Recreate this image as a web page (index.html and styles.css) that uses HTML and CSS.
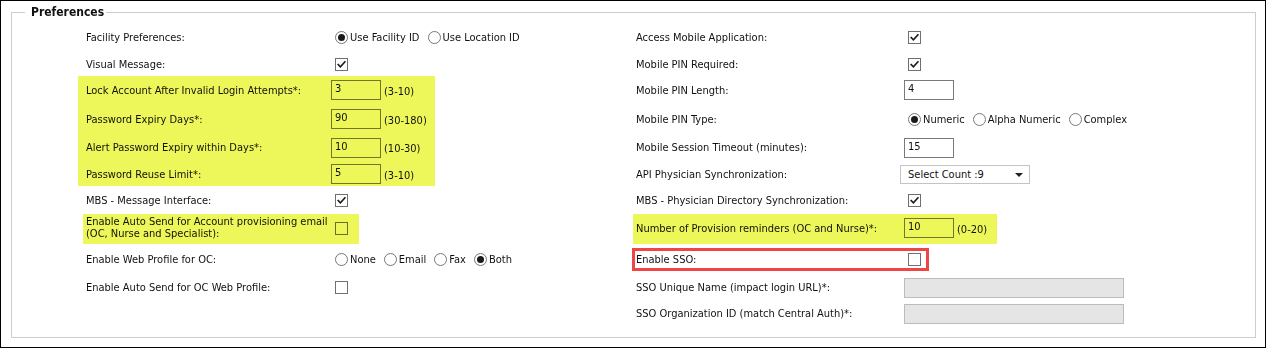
FILE: index.html
```html
<!DOCTYPE html>
<html>
<head>
<meta charset="utf-8">
<title>Preferences</title>
<link rel="stylesheet" href="styles.css">
</head>
<body>
<div class="frame">
  <fieldset class="prefs">
    <legend>Preferences</legend>
    <div class="form">
      <div class="col col-left">
        <div class="row h1"><div class="lbl">Facility Preferences:</div><div class="ctl radios"><span class="opt"><span class="radio on"></span>Use Facility ID</span><span class="opt"><span class="radio"></span>Use Location ID</span></div></div>
        <div class="row h2"><div class="lbl">Visual Message:</div><div class="ctl"><span class="cb"><svg viewBox="0 0 11 11"><path d="M2.2 5.6 L4.4 7.8 L8.9 2.8"/></svg></span></div></div>
        <div class="hl hl-a">
          <div class="row h3"><div class="lbl">Lock Account After Invalid Login Attempts*:</div><div class="ctl"><span class="tb">3</span><span class="range">(3-10)</span></div></div>
          <div class="row h4"><div class="lbl">Password Expiry Days*:</div><div class="ctl"><span class="tb">90</span><span class="range">(30-180)</span></div></div>
          <div class="row h5"><div class="lbl">Alert Password Expiry within Days*:</div><div class="ctl"><span class="tb">10</span><span class="range">(10-30)</span></div></div>
          <div class="row h6"><div class="lbl">Password Reuse Limit*:</div><div class="ctl"><span class="tb">5</span><span class="range">(3-10)</span></div></div>
        </div>
        <div class="row h7"><div class="lbl">MBS - Message Interface:</div><div class="ctl"><span class="cb"><svg viewBox="0 0 11 11"><path d="M2.2 5.6 L4.4 7.8 L8.9 2.8"/></svg></span></div></div>
        <div class="hl hl-b">
          <div class="row h8"><div class="lbl two">Enable Auto Send for Account provisioning email<br>(OC, Nurse and Specialist):</div><div class="ctl"><span class="cb"></span></div></div>
        </div>
        <div class="row h9"><div class="lbl">Enable Web Profile for OC:</div><div class="ctl radios"><span class="opt"><span class="radio"></span>None</span><span class="opt"><span class="radio"></span>Email</span><span class="opt"><span class="radio"></span>Fax</span><span class="opt"><span class="radio on"></span>Both</span></div></div>
        <div class="row h10"><div class="lbl">Enable Auto Send for OC Web Profile:</div><div class="ctl"><span class="cb"></span></div></div>
        <div class="row h11"></div>
      </div>
      <div class="col col-right">
        <div class="row h1"><div class="lbl">Access Mobile Application:</div><div class="ctl"><span class="cb"><svg viewBox="0 0 11 11"><path d="M2.2 5.6 L4.4 7.8 L8.9 2.8"/></svg></span></div></div>
        <div class="row h2"><div class="lbl">Mobile PIN Required:</div><div class="ctl"><span class="cb"><svg viewBox="0 0 11 11"><path d="M2.2 5.6 L4.4 7.8 L8.9 2.8"/></svg></span></div></div>
        <div class="row h3"><div class="lbl">Mobile PIN Length:</div><div class="ctl"><span class="tb">4</span></div></div>
        <div class="row h4"><div class="lbl">Mobile PIN Type:</div><div class="ctl radios"><span class="opt"><span class="radio on"></span>Numeric</span><span class="opt"><span class="radio"></span>Alpha Numeric</span><span class="opt"><span class="radio"></span>Complex</span></div></div>
        <div class="row h5"><div class="lbl">Mobile Session Timeout (minutes):</div><div class="ctl"><span class="tb">15</span></div></div>
        <div class="row h6"><div class="lbl">API Physician Synchronization:</div><div class="ctl"><span class="select">Select Count :9</span></div></div>
        <div class="row h7"><div class="lbl">MBS - Physician Directory Synchronization:</div><div class="ctl"><span class="cb"><svg viewBox="0 0 11 11"><path d="M2.2 5.6 L4.4 7.8 L8.9 2.8"/></svg></span></div></div>
        <div class="hl hl-c">
          <div class="row h8"><div class="lbl">Number of Provision reminders (OC and Nurse)*:</div><div class="ctl"><span class="tb">10</span><span class="range">(0-20)</span></div></div>
        </div>
        <div class="row h9 sso"><div class="lbl">Enable SSO:</div><div class="ctl"><span class="cb"></span></div></div>
        <div class="row h10"><div class="lbl">SSO Unique Name (impact login URL)*:</div><div class="ctl"><span class="tb wide disabled"></span></div></div>
        <div class="row h11"><div class="lbl">SSO Organization ID (match Central Auth)*:</div><div class="ctl"><span class="tb wide disabled"></span></div></div>
      </div>
    </div>
  </fieldset>
</div>
</body>
</html>
```

FILE: styles.css
```css
*, *::before, *::after { box-sizing: border-box; }
html, body { margin: 0; padding: 0; background: #fff; }
body {
  font-family: "DejaVu Sans Condensed", "DejaVu Sans", sans-serif;
  font-stretch: condensed;
  font-size: 11px;
  line-height: 13px;
  color: #111;
}
.frame {
  width: 1266px;
  height: 348px;
  border: 1px solid #000;
  padding: 4px 9px 9px 10px;
}
.prefs {
  margin: 0;
  padding: 0;
  border: 1px solid #cdcdcd;
  min-width: 0;
}
.prefs legend {
  margin-left: 13px;
  padding: 0 2px 0 6px;
  font-weight: bold;
  font-size: 12px;
  line-height: 14px;
  color: #111;
}
.form {
  display: grid;
  grid-template-columns: 550px 1fr;
  padding: 5px 0 10px 74px;
}
.col { display: flex; flex-direction: column; }
.row { display: flex; align-items: center; }
.lbl { flex: none; white-space: nowrap; }
.col-left .lbl { width: 245px; }
.col-right .lbl { width: 268px; }
.lbl.two { line-height: 12px; }
.ctl { display: flex; align-items: center; }

.h1 { height: 27px; }
.h2 { height: 26px; }
.h3 { height: 26px; }
.h4 { height: 32px; }
.h5 { height: 25px; }
.h6 { height: 28px; }
.h7 { height: 24px; }
.h8 { height: 32px; }
.h9 { height: 31px; }
.h10 { height: 25px; }
.h11 { height: 27px; }

/* checkbox */
.cb {
  width: 13px;
  height: 13px;
  margin-left: 4px;
  border: 1px solid #707070;
  background: #fff;
  display: inline-flex;
}
.cb svg { width: 11px; height: 11px; display: block; }
.cb path { fill: none; stroke: #1a1a1a; stroke-width: 1.6; stroke-linecap: square; }

/* radios */
.radios { gap: 8px; padding-left: 4px; }
.opt { display: inline-flex; align-items: center; gap: 2px; white-space: nowrap; }
.radio {
  width: 13px;
  height: 13px;
  border-radius: 50%;
  border: 1px solid #777;
  background: #fff;
  position: relative;
  flex: none;
}
.radio.on::after {
  content: "";
  position: absolute;
  left: 2px;
  top: 2px;
  width: 7px;
  height: 7px;
  border-radius: 50%;
  background: #1a1a1a;
}

/* textbox */
.tb {
  width: 50px;
  height: 20px;
  border: 1px solid #7a7a7a;
  background: #fff;
  padding: 0 3px;
  line-height: 16px;
  display: inline-block;
}
.tb.wide { width: 220px; }
.tb.disabled { background: #e5e5e5; border-color: #bcbcbc; }
.range { margin-left: 3px; padding-top: 2px; }

/* select */
.select {
  width: 130px;
  height: 19px;
  margin-left: -4px;
  border: 1px solid #c4c4c4;
  background: #fff;
  padding: 0 0 0 7px;
  line-height: 17px;
  display: inline-block;
  position: relative;
}
.select::after {
  content: "";
  position: absolute;
  right: 6px;
  top: 7px;
  width: 8px;
  height: 4px;
  border-left: 4px solid transparent;
  border-right: 4px solid transparent;
  border-top: 4px solid #222;
}

/* highlight overlays */
.hl { position: relative; }
.hl::after {
  content: "";
  position: absolute;
  background: #edf75a;
  mix-blend-mode: multiply;
  pointer-events: none;
}
.hl-a::after { top: -1px; bottom: 2px; left: -8px; width: 357px; }
.hl-b::after { top: 2px; bottom: 0; left: -3px; width: 276px; }
.hl-c::after { top: 2px; bottom: 0; left: -3px; width: 364px; }

/* red annotation box */
.sso { position: relative; }
.sso::after {
  content: "";
  position: absolute;
  top: 4px;
  left: -4px;
  width: 297px;
  height: 23px;
  border: 3px solid #ef4545;
  pointer-events: none;
}
```
